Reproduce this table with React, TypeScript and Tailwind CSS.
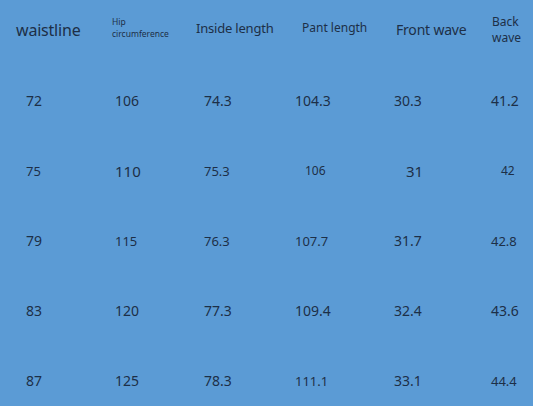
import React from "react";

type Cell = { t: string; pl: string; size: string };

const rows: Cell[][] = [
  [
    { t: "72", pl: "pl-[26px]", size: "text-[14px]" },
    { t: "106", pl: "pl-[15px]", size: "text-[14px]" },
    { t: "74.3", pl: "pl-[14px]", size: "text-[14px]" },
    { t: "104.3", pl: "pl-[10px]", size: "text-[14px]" },
    { t: "30.3", pl: "pl-[9px]", size: "text-[14px]" },
    { t: "41.2", pl: "pl-[11px]", size: "text-[14px]" },
  ],
  [
    { t: "75", pl: "pl-[26px]", size: "text-[13px]" },
    { t: "110", pl: "pl-[15px]", size: "text-[15px]" },
    { t: "75.3", pl: "pl-[14px]", size: "text-[13px]" },
    { t: "106", pl: "pl-[20px]", size: "text-[12px]" },
    { t: "31", pl: "pl-[21px]", size: "text-[15px]" },
    { t: "42", pl: "pl-[21px]", size: "text-[12px]" },
  ],
  [
    { t: "79", pl: "pl-[26px]", size: "text-[14px]" },
    { t: "115", pl: "pl-[15px]", size: "text-[13px]" },
    { t: "76.3", pl: "pl-[14px]", size: "text-[13px]" },
    { t: "107.7", pl: "pl-[10px]", size: "text-[13px]" },
    { t: "31.7", pl: "pl-[9px]", size: "text-[14px]" },
    { t: "42.8", pl: "pl-[11px]", size: "text-[13px]" },
  ],
  [
    { t: "83", pl: "pl-[26px]", size: "text-[14px]" },
    { t: "120", pl: "pl-[15px]", size: "text-[14px]" },
    { t: "77.3", pl: "pl-[14px]", size: "text-[14px]" },
    { t: "109.4", pl: "pl-[10px]", size: "text-[14px]" },
    { t: "32.4", pl: "pl-[9px]", size: "text-[14px]" },
    { t: "43.6", pl: "pl-[11px]", size: "text-[14px]" },
  ],
  [
    { t: "87", pl: "pl-[26px]", size: "text-[14px]" },
    { t: "125", pl: "pl-[15px]", size: "text-[14px]" },
    { t: "78.3", pl: "pl-[14px]", size: "text-[14px]" },
    { t: "111.1", pl: "pl-[10px]", size: "text-[13px]" },
    { t: "33.1", pl: "pl-[9px]", size: "text-[14px]" },
    { t: "44.4", pl: "pl-[11px]", size: "text-[13px]" },
  ],
];

export default function App() {
  return (
    <div
      className="w-[533px] h-[406px] overflow-hidden bg-[#5b9bd5] text-[#1d2f47]"
      style={{ fontFamily: '"Noto Sans", "Open Sans", sans-serif' }}
    >
      <div className="grid grid-cols-[100px_90px_95px_100px_95px_53px]">
        {/* header */}
        <div className="h-[66px] flex items-center pb-[6px] pl-[16px] text-[16px] tracking-[-0.2px] leading-none">
          waistline
        </div>
        <div className="h-[66px] flex flex-col justify-center pb-[10px] pl-[12px] text-[8.5px] leading-[12px]">
          <span>Hip</span>
          <span>circumference</span>
        </div>
        <div className="h-[66px] flex items-center pb-[10px] pl-[6px] text-[13px] tracking-[-0.2px] leading-none">
          Inside length
        </div>
        <div className="h-[66px] flex items-center pb-[10px] pl-[17px] text-[12px] leading-none">
          Pant length
        </div>
        <div className="h-[66px] flex items-center pb-[6px] pl-[11px] text-[14px] tracking-[-0.2px] leading-none">
          Front wave
        </div>
        <div className="h-[66px] flex flex-col justify-center pb-[6px] pl-[12px] text-[12px] leading-[16px]">
          <span>Back</span>
          <span>wave</span>
        </div>

        {rows.map((r, i) =>
          r.map((c, j) => (
            <div
              key={`${i}-${j}`}
              className={`h-[70px] flex items-center leading-none ${c.pl} ${c.size}`}
            >
              {c.t}
            </div>
          ))
        )}
      </div>
    </div>
  );
}
